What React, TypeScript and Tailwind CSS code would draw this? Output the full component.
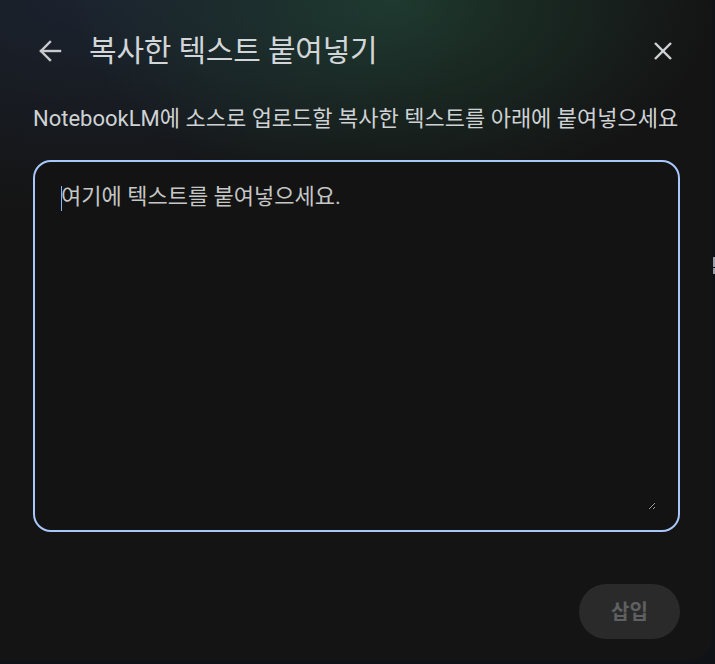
import React from "react";

export default function App() {
  return (
    <div className="relative w-[715px] h-[664px] overflow-hidden bg-[#0f1317] font-['Roboto','Noto_Sans_CJK_KR',sans-serif]">
      <div className="flex flex-col w-[712px] h-[660px] rounded-br-[22px] bg-[#141414] bg-[radial-gradient(ellipse_45%_30%_at_55%_0%,rgba(38,86,66,0.55),transparent),radial-gradient(ellipse_55%_32%_at_12%_0%,rgba(36,52,80,0.45),transparent)] pl-[33px] pr-[32px] pt-[27px] pb-[21px]">
        <div className="flex items-center h-[48px]">
          <button className="flex items-center justify-center w-[28px] h-[28px] ml-[3px] text-[#c8cbce]">
            <svg width="24" height="22" viewBox="0 0 24 22" fill="none" stroke="currentColor" strokeWidth="2.4" strokeLinecap="square">
              <path d="M3 11H22" />
              <path d="M12 2L3 11L12 20" />
            </svg>
          </button>
          <div className="ml-[25px] text-[30px] leading-[38px] text-[#d3d6d9] tracking-[-0.2px]">
            복사한 텍스트 붙여넣기
          </div>
          <div className="flex-1" />
          <button className="flex items-center justify-center w-[24px] h-[24px] mr-[5px] text-[#d0d3d6]">
            <svg width="20" height="20" viewBox="0 0 20 20" fill="none" stroke="currentColor" strokeWidth="2.4">
              <path d="M2 2L18 18" />
              <path d="M18 2L2 18" />
            </svg>
          </button>
        </div>
        <div className="mt-[30px] text-[22px] leading-[28px] text-[#cfd2d5] whitespace-nowrap">
          NotebookLM에 소스로 업로드할 복사한 텍스트를 아래에 붙여넣으세요
        </div>
        <div className="relative mt-[27px] h-[372px] border-2 border-[#a8c7fa] rounded-[18px] bg-[#131313] pl-[26px] pr-[22px] pt-[21px] pb-[20px] flex">
          <textarea
            placeholder="여기에 텍스트를 붙여넣으세요."
            className="w-full h-full bg-transparent outline-none resize-y text-[22px] leading-[28px] text-[#e3e3e3] placeholder:text-[#c4c7c5] caret-transparent [color-scheme:dark] font-['Roboto','Noto_Sans_CJK_KR',sans-serif]"
          />
          <div className="absolute left-[26px] top-[24px] w-[1px] h-[25px] bg-[#8ab4f8]" />
        </div>
        <div className="flex justify-end mt-[52px]">
          <button className="w-[101px] h-[55px] rounded-full bg-[#2a2a2a] text-[#5f6061] text-[20px] font-bold">
            삽입
          </button>
        </div>
      </div>
      <div className="absolute left-[713px] top-[257px] w-[2px] h-[10px] bg-[#9aa0a6]" />
      <div className="absolute left-[713px] top-[268px] w-[2px] h-[6px] bg-[#9aa0a6]" />
    </div>
  );
}
